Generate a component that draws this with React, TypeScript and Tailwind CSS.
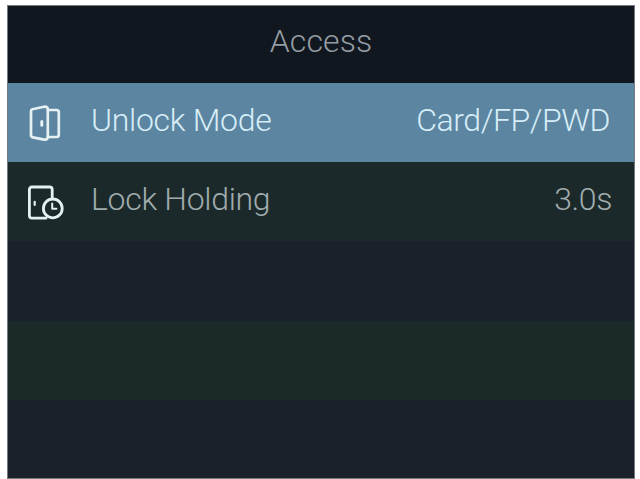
import type { ReactNode } from "react";

function DoorIcon() {
  return (
    <svg width="40" height="44" viewBox="0 0 40 44" fill="none" stroke="currentColor" strokeWidth="2.7" strokeLinejoin="round" strokeLinecap="round">
      <path d="M5.5 7.2 17 4.8Q20.8 4.2 20.8 7.4V34.6Q20.8 38.2 17 37.6L6 35.4Q4 35 4 33V9Q4 7.6 5.5 7.2Z" />
      <path d="M21 8H29.6Q31.8 8 31.8 10.2V32.8Q31.8 35 29.6 35H21" />
      <path d="M14.8 19.4V23.2" strokeWidth="3" />
    </svg>
  );
}

function DoorTimerIcon() {
  return (
    <svg width="40" height="44" viewBox="0 0 40 44" fill="none" stroke="currentColor" strokeWidth="2.8" strokeLinejoin="round" strokeLinecap="round">
      <path d="M25.2 16.5V8.6Q25.2 6 22.6 6H5Q2.4 6 2.4 8.6V34.6Q2.4 37.2 5 37.2H19" />
      <path d="M7.7 20.8V24" strokeWidth="2.2" />
      <circle cx="25.8" cy="27.4" r="9.4" />
      <path d="M25.2 22.6V27.8H29.4" strokeWidth="2" />
    </svg>
  );
}

type Item = {
  label: string;
  value: string;
  icon: ReactNode;
  rowClass: string;
  labelClass: string;
  valueClass: string;
};

const items: Item[] = [
  {
    label: "Unlock Mode",
    value: "Card/FP/PWD",
    icon: <DoorIcon />,
    rowClass: "bg-[#5b85a0] text-[#d7edf7]",
    labelClass: "tracking-[-0.3px]",
    valueClass: "tracking-[-0.45px] mr-[24px]",
  },
  {
    label: "Lock Holding",
    value: "3.0s",
    icon: <DoorTimerIcon />,
    rowClass: "bg-[#1b292a] text-[#a0acad]",
    labelClass: "tracking-[-0.3px]",
    valueClass: "tracking-[-0.4px] mr-[22px]",
  },
];

export default function App() {
  return (
    <div className="h-[479px] w-[640px] overflow-hidden bg-white pl-[7px] pt-[5px] font-['Roboto',sans-serif] text-[32px] font-light leading-none">
      <div className="flex h-[474px] w-[628px] flex-col border border-[#747b80] bg-[#1b212a]">
        <header className="flex h-[77px] shrink-0 items-center justify-center bg-[#11171f] pb-[7px] text-[#949ca3]">
          <h1 className="tracking-[0.1px]">Access</h1>
        </header>

        {/* Menu rows */}
        <ul className="flex flex-1 flex-col">
          {items.map((item) => (
            <li key={item.label} className={`flex h-[79px] shrink-0 items-center ${item.rowClass}`}>
              <span className="ml-[19px] w-[64px] pt-[2px] text-[#e5f1f2]">{item.icon}</span>
              <span className={`flex-1 pb-[5px] ${item.labelClass}`}>{item.label}</span>
              <span className={`pb-[5px] ${item.valueClass}`}>{item.value}</span>
            </li>
          ))}
          <li className="h-[80px] shrink-0 bg-[#1b212a]" />
          <li className="h-[79px] shrink-0 bg-[#1b2929]" />
          <li className="flex-1 bg-[#1b212a]" />
        </ul>
      </div>
    </div>
  );
}
